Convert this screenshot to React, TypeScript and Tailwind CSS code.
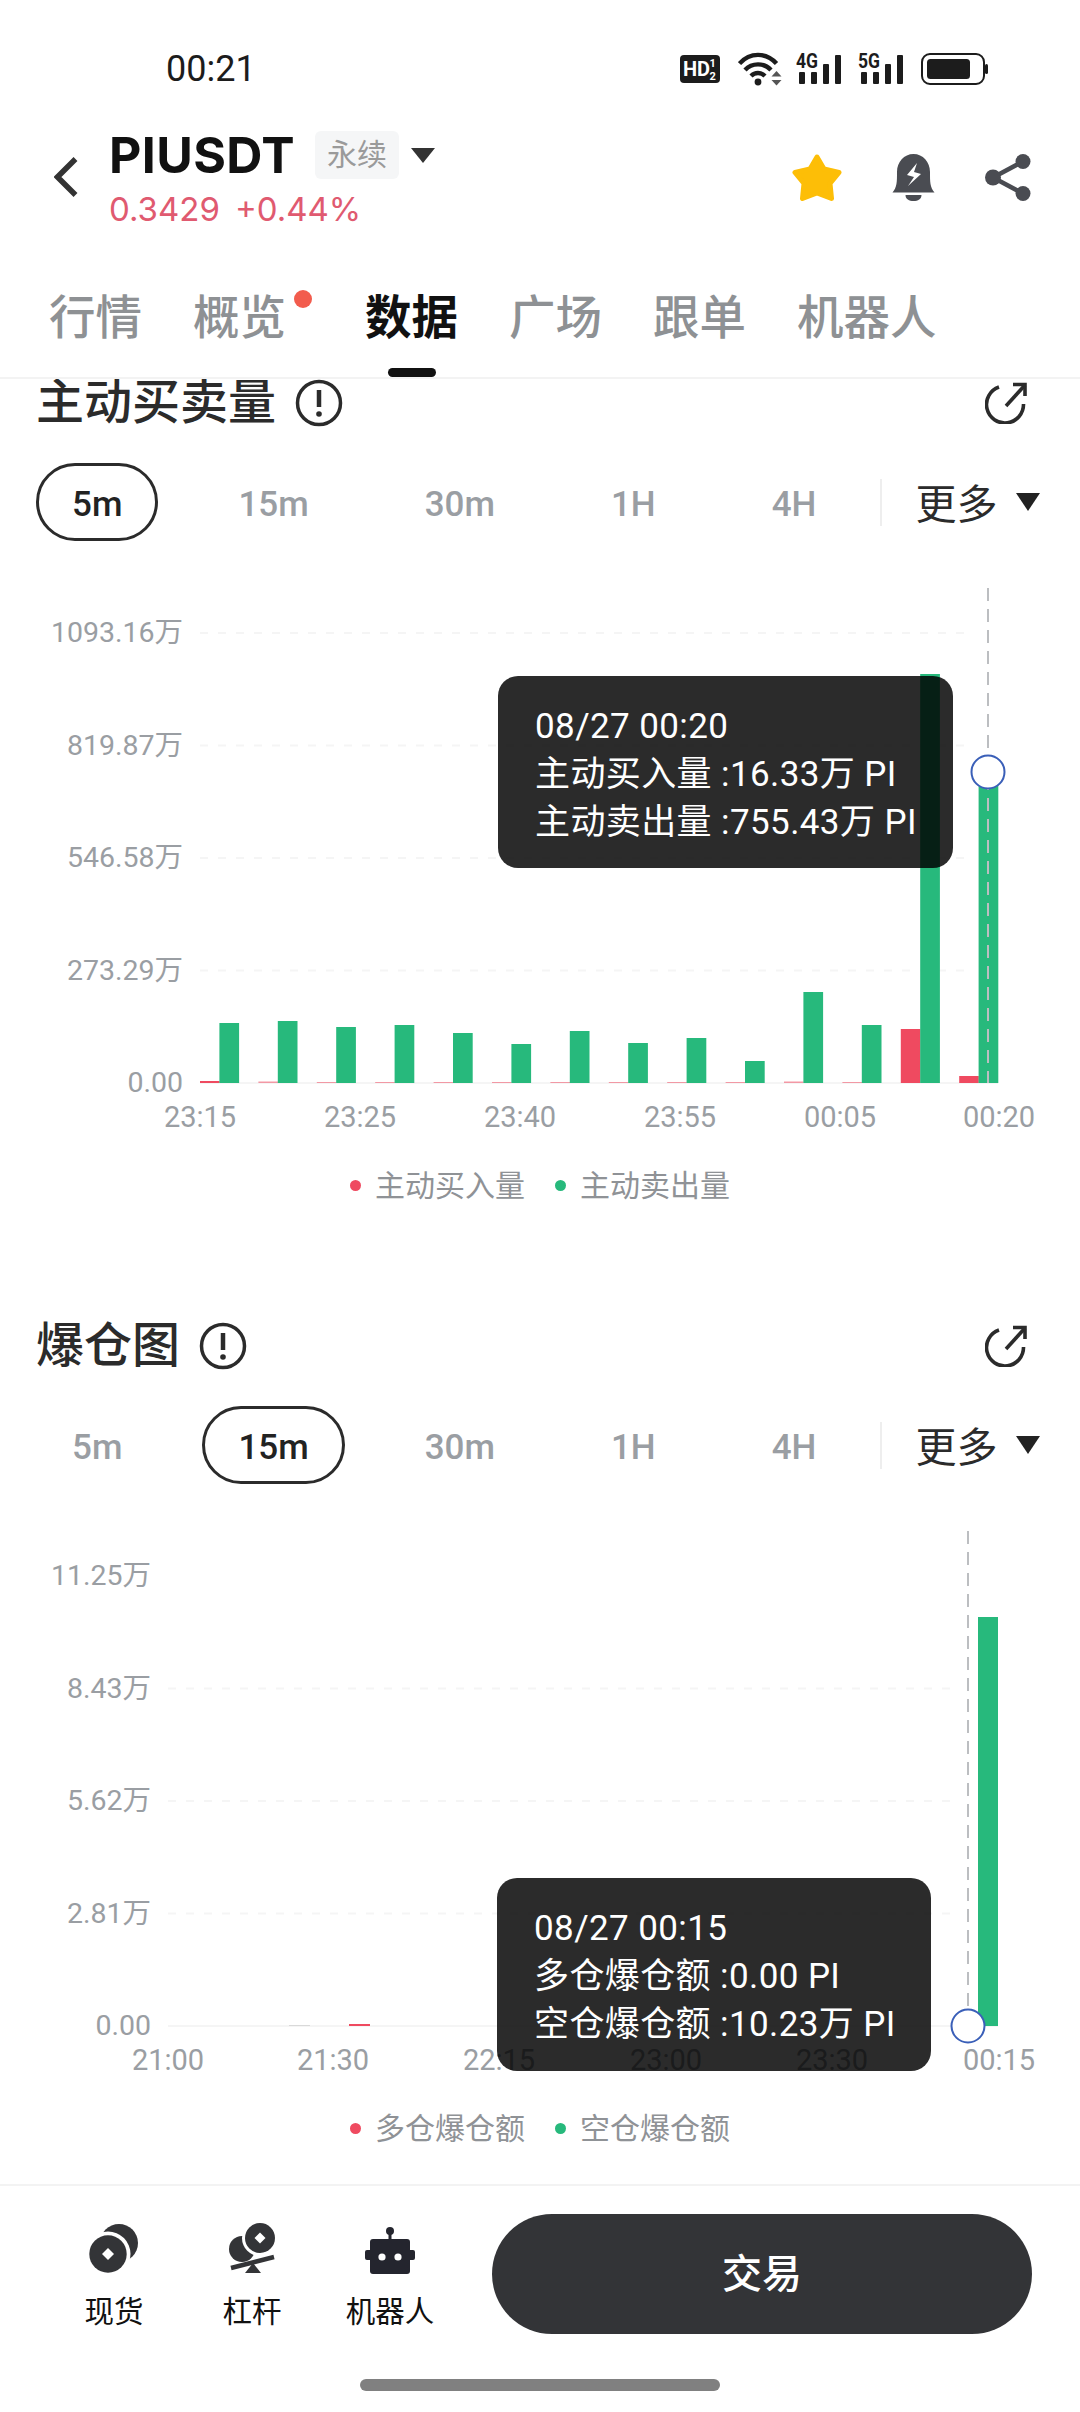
import { useState } from 'react';

const RANGES = ['5m', '15m', '30m', '1H', '4H'];
const TABS = ['行情', '概览', '数据', '广场', '跟单', '机器人'];

const GREEN = '#27b97c';
const RED = '#ef4a60';
const BASELINE = 523;
const GRID_STEP = 112.5;

type Bar = { x: number; w: number; h: number; color: string; opacity?: number };

const BUY_HEIGHTS = [2, 1.5, 1, 1, 1, 1, 1, 1, 1, 1, 1.5, 1, 54, 7];
const SELL_HEIGHTS = [60, 62, 56, 58, 50, 39, 52, 40, 45, 22, 91, 58, 409, 311];

const TAKER_BARS: Bar[] = [
  ...BUY_HEIGHTS.map((h, i) => ({
    x: 200 + 58.4 * i,
    w: 19.6,
    h,
    color: RED,
    opacity: h < 2 ? 0.55 : 1,
  })),
  ...SELL_HEIGHTS.map((h, i) => ({ x: 219.4 + 58.4 * i, w: 19.7, h, color: GREEN })),
];

const LIQUIDATION_BARS: Bar[] = [
  { x: 349, w: 21, h: 2, color: RED },
  { x: 289, w: 21, h: 1, color: '#d9d9d9' },
  { x: 978, w: 20, h: 409, color: GREEN },
];

function Triangle({ className }: { className: string }) {
  return (
    <svg viewBox="0 0 24 17" preserveAspectRatio="none" className={className}>
      <path d="M0 0H24L12 17Z" fill="currentColor" />
    </svg>
  );
}

function HdIcon() {
  return (
    <svg width="40" height="28" viewBox="0 0 40 28" className="font-[Roboto]">
      <rect width="40" height="28" rx="4" fill="#1c1c1c" />
      <text x="3" y="21" fontSize="20" fontWeight="700" fill="#fff">
        HD
      </text>
      <text x="29.5" y="12" fontSize="11" fontWeight="700" fill="#fff">
        1
      </text>
      <text x="29.5" y="25" fontSize="11" fontWeight="700" fill="#fff">
        2
      </text>
    </svg>
  );
}

function WifiIcon() {
  return (
    <svg width="44" height="34" viewBox="0 0 44 34" fill="none" stroke="#1c1c1c" strokeWidth="4.4">
      <path d="M1.5 11.5C12 0 28 0 38.5 11.5" />
      <path d="M7 18C14 10.5 26 10.5 33 18" />
      <path d="M13 24C17 20 23 20 27 24" />
      <circle cx="20" cy="30" r="3.4" fill="#1c1c1c" stroke="none" />
      <path d="M33.5 24.5L38.5 19L43.5 24.5Z" fill="#555" stroke="none" />
      <path d="M33.5 28L38.5 33.5L43.5 28Z" fill="#555" stroke="none" />
    </svg>
  );
}

function SignalIcon({ label }: { label: string }) {
  return (
    <svg width="47" height="42" viewBox="0 -4 47 42" className="font-[Roboto]">
      <text x="0" y="16" fontSize="20" fontWeight="700" fill="#1c1c1c" textLength="22" lengthAdjust="spacingAndGlyphs">
        {label}
      </text>
      <rect x="3" y="20" width="6" height="12" rx="1" fill="#1c1c1c" />
      <rect x="15" y="20" width="6" height="12" rx="1" fill="#1c1c1c" />
      <rect x="27" y="12" width="6" height="20" rx="1" fill="#1c1c1c" />
      <rect x="39" y="3" width="6" height="29" rx="1" fill="#1c1c1c" />
    </svg>
  );
}

function BatteryIcon() {
  return (
    <svg width="67" height="32" viewBox="0 0 67 32" fill="none">
      <rect x="1" y="1" width="62" height="30" rx="8" stroke="#1c1c1c" strokeWidth="2" />
      <rect x="6" y="6" width="43" height="20" rx="3.5" fill="#1c1c1c" />
      <rect x="64" y="11" width="3" height="10" rx="1.5" fill="#1c1c1c" />
    </svg>
  );
}

function BackIcon() {
  return (
    <svg width="24" height="40" viewBox="0 0 24 40" fill="none">
      <path d="M21.5 2L3.5 20L21.5 38" stroke="#333" strokeWidth="5.5" />
    </svg>
  );
}

function StarIcon() {
  return (
    <svg width="50" height="47" viewBox="0 0 50 47">
      <path
        d="M25 3L32 15L47 18.5L38 29.5L39.5 44.5L25 39L10.5 44.5L12 29.5L3 18.5L18 15Z"
        fill="#fdbe07"
        stroke="#fdbe07"
        strokeWidth="5"
        strokeLinejoin="round"
      />
    </svg>
  );
}

function AlertIcon() {
  return (
    <svg width="43" height="47" viewBox="0 0 43 47">
      <path
        d="M0.5 38.5C5 33 5 28 5 18C5 8 12 0 21.5 0C31 0 38 8 38 18C38 28 38 33 42.5 38.5Z"
        fill="#4a4c52"
      />
      <path d="M13.5 41H29.5C29.5 45 26 47 21.5 47C17 47 13.5 45 13.5 41Z" fill="#4a4c52" />
      <path d="M25 9L15 21L22 23L16 32L29 20L22 18Z" fill="#fff" />
    </svg>
  );
}

function ShareIcon() {
  return (
    <svg width="46" height="47" viewBox="0 0 46 47" fill="#4a4c52" stroke="#4a4c52">
      <path d="M38 7.5L8 23.5L38 39.5" fill="none" strokeWidth="4.5" />
      <circle cx="38" cy="7.5" r="7.5" stroke="none" />
      <circle cx="38" cy="39.5" r="7.5" stroke="none" />
      <circle cx="8" cy="23.5" r="8" stroke="none" />
    </svg>
  );
}

function InfoIcon() {
  return (
    <svg width="48" height="48" viewBox="0 0 48 48" fill="none" stroke="#2b2b2b">
      <circle cx="24" cy="24" r="21.5" strokeWidth="3.5" />
      <path d="M24 11V28" strokeWidth="4.5" />
      <circle cx="24" cy="35" r="2.8" fill="#2b2b2b" stroke="none" />
    </svg>
  );
}

function OpenIcon() {
  return (
    <svg width="42" height="42" viewBox="0 0 42 42" fill="none" stroke="#2b2b2b" strokeWidth="3.6">
      <path d="M14 5A18.5 18.5 0 1 0 38.5 22" />
      <path d="M21 24L40 3" />
      <path d="M28 2.5H40V14" />
    </svg>
  );
}

function SpotIcon() {
  return (
    <svg width="52" height="50" viewBox="0 0 52 50">
      <circle cx="31" cy="19" r="19" fill="#333437" />
      <circle cx="20" cy="30" r="22.5" fill="#fff" />
      <circle cx="20" cy="30" r="18.7" fill="#333437" />
      <path d="M20 24L26 30L20 36L14 30Z" fill="#fff" />
    </svg>
  );
}

function LeverageIcon() {
  return (
    <svg width="48" height="52" viewBox="0 0 48 52">
      <circle cx="14" cy="27" r="13" fill="#333437" />
      <circle cx="32" cy="16" r="18" fill="#fff" />
      <circle cx="32" cy="16" r="15" fill="#333437" />
      <path d="M32 10.5L37.5 16L32 21.5L26.5 16Z" fill="#fff" />
      <path d="M3 46L46 35" stroke="#333437" strokeWidth="4.5" />
      <path d="M25 41L33 51H17Z" fill="#333437" />
    </svg>
  );
}

function RobotIcon() {
  return (
    <svg width="50" height="47" viewBox="0 0 50 47">
      <circle cx="25" cy="4" r="4" fill="#24252e" />
      <rect x="23.5" y="5" width="3" height="8" fill="#24252e" />
      <rect x="5" y="12" width="40" height="35" rx="3" fill="#24252e" />
      <rect x="0" y="23" width="50" height="10" rx="2" fill="#24252e" />
      <circle cx="17" cy="30" r="3.6" fill="#fff" />
      <circle cx="33" cy="30" r="3.6" fill="#fff" />
    </svg>
  );
}

function StatusBar() {
  return (
    <div className="flex h-[131px] items-start pt-[49px] pr-[92px] pl-[166px]">
      <span className="text-[36px] leading-10 text-[#1c1c1c]">00:21</span>
      <div className="ml-auto flex h-[38px] items-center pt-[2px]">
        <HdIcon />
        <div className="ml-[18px]">
          <WifiIcon />
        </div>
        <div className="ml-[14px] flex gap-[15px]">
          <SignalIcon label="4G" />
          <SignalIcon label="5G" />
        </div>
        <div className="ml-[16px]">
          <BatteryIcon />
        </div>
      </div>
    </div>
  );
}

function PairHeader() {
  return (
    <header className="flex h-[92px] items-center pr-[49px] pl-[54px]">
      <BackIcon />
      <div className="ml-[31px] flex flex-col self-start">
        <div className="flex h-12 items-center">
          <span className="font-[Inter] text-[50px] leading-none font-bold tracking-[0.4px] text-[#111]">
            PIUSDT
          </span>
          <span className="ml-[20px] rounded-md bg-[#f5f6f7] px-3 text-[30px] leading-[48px] text-[#9a9a9a]">
            永续
          </span>
          <Triangle className="ml-3 h-[15px] w-6 text-[#333]" />
        </div>
        <div className="mt-4 flex gap-[15px] font-[Inter] text-[33px] leading-7 text-[#e05a70]">
          <span>0.3429</span>
          <span>+0.44%</span>
        </div>
      </div>
      <div className="ml-auto flex items-center gap-[50px]">
        <StarIcon />
        <AlertIcon />
        <ShareIcon />
      </div>
    </header>
  );
}

function TabBar({ active, onSelect }: { active: string; onSelect: (tab: string) => void }) {
  return (
    <nav className="z-10 flex h-[156px] gap-[51px] border-b-2 border-[#f3f3f3] bg-white pt-[72px] pl-[49px]">
      {TABS.map((tab) => (
        <button
          key={tab}
          onClick={() => onSelect(tab)}
          className={`relative flex flex-col items-center ${tab === '概览' ? 'mr-[28px]' : ''}`}
        >
          <span
            className={`text-[46.5px] leading-[46px] ${
              tab === active ? 'font-bold text-[#111]' : 'font-medium text-[#8e9194]'
            }`}
          >
            {tab}
          </span>
          {tab === active && <span className="mt-[27px] h-[9px] w-12 rounded-full bg-[#111]" />}
          {tab === '概览' && (
            <span className="absolute top-[-5px] right-[-26px] size-[18px] rounded-full bg-[#f25c4d]" />
          )}
        </button>
      ))}
    </nav>
  );
}

function RangeSelector({ selected }: { selected: string }) {
  return (
    <div className="mt-9 flex h-[78px] items-center pl-9">
      <div className="flex gap-[44px]">
        {RANGES.map((range) => (
          <span
            key={range}
            className={`flex h-[78px] items-center rounded-[39px] border-[3px] px-[33px] pt-[7px] text-[35px] font-medium ${
              range === selected ? 'border-[#2b2b2b] text-[#222]' : 'border-transparent text-[#9a9ea3]'
            }`}
          >
            {range}
          </span>
        ))}
      </div>
      <span className="ml-[28px] h-[47px] w-[2px] bg-[#eeeeee]" />
      <span className="ml-[33px] pt-[6px] text-[41px] leading-none text-[#2b2b2b]">更多</span>
      <Triangle className="ml-[19px] h-[18px] w-6 text-[#222]" />
    </div>
  );
}

type ChartProps = {
  axisRight: number;
  gridLeft: number;
  gridRight: number;
  hideTopGrid?: boolean;
  yLabels: string[];
  xLabels: { x: number; label: string }[];
  bars: Bar[];
  cursorX: number;
  cursorY: number;
  tooltipClass: string;
  tooltip: string[];
};

function BarChart({
  axisRight,
  gridLeft,
  gridRight,
  hideTopGrid,
  yLabels,
  xLabels,
  bars,
  cursorX,
  cursorY,
  tooltipClass,
  tooltip,
}: ChartProps) {
  return (
    <div className="relative mt-[19px] h-[580px]">
      <svg viewBox="0 0 1080 580" width="1080" height="580" className="block">
        {yLabels.map((label, i) => {
          const y = BASELINE - GRID_STEP * i;
          const showGrid = !(hideTopGrid && i === yLabels.length - 1);
          return (
            <g key={label}>
              {showGrid && (
                <line
                  x1={gridLeft}
                  x2={i === 0 ? 998 : gridRight}
                  y1={y}
                  y2={y}
                  stroke="#f5f5f5"
                  strokeWidth="2"
                  strokeDasharray={i === 0 ? undefined : '8 10'}
                />
              )}
              <text x={axisRight} y={y + 9} textAnchor="end" fontSize="28.5" fill="#9a9ea3">
                {label}
              </text>
            </g>
          );
        })}
        {xLabels.map((tick) => (
          <text key={tick.label} x={tick.x} y={567} textAnchor="middle" fontSize="29" fill="#9a9ea3">
            {tick.label}
          </text>
        ))}
        {bars.map((bar, i) => (
          <rect
            key={i}
            x={bar.x}
            y={BASELINE - bar.h}
            width={bar.w}
            height={bar.h}
            fill={bar.color}
            opacity={bar.opacity ?? 1}
          />
        ))}
        <line
          x1={cursorX}
          x2={cursorX}
          y1={28}
          y2={BASELINE}
          stroke="#bcbec1"
          strokeWidth="2"
          strokeDasharray="13 8"
        />
        <circle cx={cursorX} cy={cursorY} r="16.5" fill="#fff" stroke="#3a5fb8" strokeWidth="2" />
      </svg>
      <div
        className={`absolute rounded-[20px] bg-[rgba(0,0,0,0.83)] pt-[27px] pl-[37px] text-[35px] leading-[48px] tracking-[0.4px] text-white ${tooltipClass}`}
      >
        {tooltip.map((line) => (
          <div key={line}>{line}</div>
        ))}
      </div>
    </div>
  );
}

function Legend({ buy, sell }: { buy: string; sell: string }) {
  return (
    <div className="mt-[25px] flex h-10 items-center pl-[350px] text-[30px] text-[#8f9296]">
      <span className="size-[11px] rounded-full bg-[#ef4a60]" />
      <span className="ml-[14px]">{buy}</span>
      <span className="ml-[30px] size-[11px] rounded-full bg-[#27b97c]" />
      <span className="ml-[14px]">{sell}</span>
    </div>
  );
}

function Section({ title, children }: { title: string; children: React.ReactNode }) {
  return (
    <section className="h-[943px]">
      <div className="flex h-12 items-center pr-[53px] pl-[36px]">
        <h2 className="text-[48px] leading-[48px] font-medium text-[#2b2b2b]">{title}</h2>
        <div className="ml-[19px]">
          <InfoIcon />
        </div>
        <div className="ml-auto">
          <OpenIcon />
        </div>
      </div>
      {children}
    </section>
  );
}

function ToolButton({ label, icon }: { label: string; icon: React.ReactNode }) {
  return (
    <div className="flex w-[138px] flex-col items-center">
      <div className="flex h-[52px] items-end">{icon}</div>
      <span className="mt-[20px] text-[29.5px] leading-9 text-[#111]">{label}</span>
    </div>
  );
}

export default function App() {
  const [tab, setTab] = useState('数据');

  return (
    <div className="flex h-[2412px] w-[1080px] flex-col overflow-hidden bg-white font-[Roboto,'Noto_Sans_CJK_SC',sans-serif]">
      <StatusBar />
      <PairHeader />
      <TabBar active={tab} onSelect={setTab} />

      <main className="min-h-0 flex-1">
        <Section title="主动买卖量">
          <RangeSelector selected="5m" />
          <BarChart
            axisRight={183}
            gridLeft={200}
            gridRight={965}
            yLabels={['0.00', '273.29万', '546.58万', '819.87万', '1093.16万']}
            xLabels={[
              { x: 200, label: '23:15' },
              { x: 360, label: '23:25' },
              { x: 520, label: '23:40' },
              { x: 680, label: '23:55' },
              { x: 840, label: '00:05' },
              { x: 999, label: '00:20' },
            ]}
            bars={TAKER_BARS}
            cursorX={988}
            cursorY={212}
            tooltipClass="top-[116px] left-[498px] h-[192px] w-[455px]"
            tooltip={['08/27 00:20', '主动买入量 :16.33万 PI', '主动卖出量 :755.43万 PI']}
          />
          <Legend buy="主动买入量" sell="主动卖出量" />
        </Section>

        <Section title="爆仓图">
          <RangeSelector selected="15m" />
          <BarChart
            axisRight={151}
            gridLeft={168}
            gridRight={954}
            hideTopGrid
            yLabels={['0.00', '2.81万', '5.62万', '8.43万', '11.25万']}
            xLabels={[
              { x: 168, label: '21:00' },
              { x: 333, label: '21:30' },
              { x: 499, label: '22:15' },
              { x: 666, label: '23:00' },
              { x: 832, label: '23:30' },
              { x: 999, label: '00:15' },
            ]}
            bars={LIQUIDATION_BARS}
            cursorX={968}
            cursorY={523}
            tooltipClass="top-[375px] left-[497px] h-[193px] w-[434px]"
            tooltip={['08/27 00:15', '多仓爆仓额 :0.00 PI', '空仓爆仓额 :10.23万 PI']}
          />
          <Legend buy="多仓爆仓额" sell="空仓爆仓额" />
        </Section>
      </main>

      <footer className="z-10 h-[228px] border-t-2 border-[#f3f3f3] bg-white">
        <div className="flex h-[148px] items-start pl-[45px]">
          <div className="flex pt-[36px]">
            <ToolButton label="现货" icon={<SpotIcon />} />
            <ToolButton label="杠杆" icon={<LeverageIcon />} />
            <ToolButton label="机器人" icon={<RobotIcon />} />
          </div>
          <button className="mt-[28px] ml-[33px] flex h-[120px] w-[540px] items-center justify-center rounded-[60px] bg-[#333437] pt-[2px] text-[40px] font-medium text-white">
            交易
          </button>
        </div>
        <div className="mx-auto mt-[45px] h-3 w-[360px] rounded-full bg-[#808080]" />
      </footer>
    </div>
  );
}
